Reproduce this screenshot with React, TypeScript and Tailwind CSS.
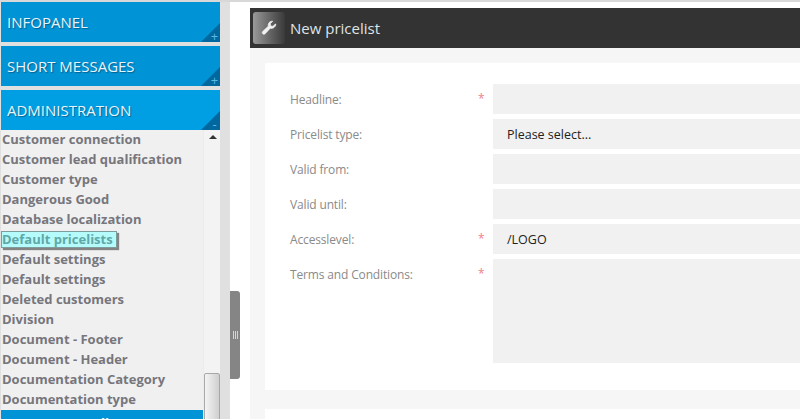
import React from "react";

const items = [
  "Customer connection",
  "Customer lead qualification",
  "Customer type",
  "Dangerous Good",
  "Database localization",
  "Default pricelists",
  "Default settings",
  "Default settings",
  "Deleted customers",
  "Division",
  "Document - Footer",
  "Document - Header",
  "Documentation Category",
  "Documentation type",
];

function Panel({ title, sign, active }: { title: string; sign: string; active?: boolean }) {
  return (
    <div className={`relative h-10 shrink-0 ${active ? "bg-[#009fe3]" : "bg-[#0093d6]"} flex items-center pl-[6px]`}>
      <span className="text-[15px] text-[#e8f4fb] [text-shadow:1px_1px_1px_rgba(0,0,0,0.35)]">{title}</span>
      <div className="absolute right-0 bottom-0 w-[19px] h-[19px] bg-[#00689f] [clip-path:polygon(100%_0,100%_100%,0_100%)]" />
      <span className="absolute right-[1px] bottom-0 text-[13px] leading-[11px] h-[11px] w-[9px] text-center text-[#5bb8e6]">{sign}</span>
    </div>
  );
}

function Row({ label, req, value, tall }: { label: string; req?: boolean; value?: string; tall?: boolean }) {
  return (
    <div className="flex">
      <div className="w-[188px] h-[30px] shrink-0 text-[12px] tracking-[-0.15px] text-[#8a8a8a] leading-[31px]">{label}</div>
      <div className="w-[15px] h-[30px] shrink-0 text-[12px] leading-[30px] text-[#f4808a]">{req ? "*" : ""}</div>
      <div className={`flex-1 bg-[#f1f1f1] pl-[14px] text-[12.5px] text-[#222] leading-[31px] ${tall ? "h-[104px]" : "h-[30px]"}`}>{value}</div>
    </div>
  );
}

export default function App() {
  return (
    <div className="relative h-[419px] w-[800px] overflow-hidden bg-white flex flex-col font-['Open_Sans',sans-serif]">
      <div className="h-[2px] shrink-0 bg-[#d8d8d8]" />
      <div className="flex flex-1 min-h-0">
        <aside className="w-[230px] shrink-0 bg-[#e0e0e0] pl-[1px] pr-[10px] flex flex-col gap-[4px]">
          <Panel title="INFOPANEL" sign="+" />
          <Panel title="SHORT MESSAGES" sign="+" />
          <div className="flex flex-col flex-1 min-h-0">
            <Panel title="ADMINISTRATION" sign="-" active />
            <div className="relative flex-1 min-h-0 bg-[#f0f0f0] overflow-hidden flex">
              <div className="w-[202px] shrink-0 flex flex-col">
                {items.map((t, i) => (
                  <div key={i} className="h-5 shrink-0 flex items-center">
                    {t === "Default pricelists" ? (
                      <span className="text-[13px] font-bold leading-[15px] text-[#5fa8a8] bg-[#b5fbfb] border border-[#7f9c9c] shadow-[2px_2px_1px_rgba(0,0,0,0.45)] pr-[3px] mt-[-1px]">{t}</span>
                    ) : (
                      <span className="text-[13px] font-bold text-[#76767c] pl-[1px]">{t}</span>
                    )}
                  </div>
                ))}
                <div className="h-[10px] shrink-0 bg-[#0093d6] text-white text-[13px] leading-[26px] font-bold text-center overflow-hidden">Edit</div>
              </div>
              <div className="relative flex-1 bg-[#f3f3f3] border-l border-[#ececec]">
                <div className="absolute left-[5px] top-[5px] w-0 h-0 border-x-[4px] border-x-transparent border-b-[4px] border-b-[#333]" />
                <div className="absolute left-0 right-0 top-[243px] h-[60px] bg-gradient-to-r from-[#f4f4f4] to-[#cfcfcf] border border-[#a8a8a8] rounded-t-[2px]" />
              </div>
            </div>
          </div>
        </aside>
        <main className="flex-1 min-w-0 pl-[20px] pt-[6px]">
          <div className="h-[40px] bg-[#333333] flex items-center pl-[3px] gap-[5px]">
            <div className="w-[32px] h-[32px] rounded-[3px] bg-gradient-to-r from-[#9a9a9a] to-[#3a3a3a] flex items-center justify-center">
              <svg width="16" height="16" viewBox="0 0 24 24" fill="#f2f2f2" stroke="#f2f2f2" strokeWidth="1">
                <path d="M22 6.5a6 6 0 0 1-8 5.7L6.2 20.6a2.5 2.5 0 0 1-3.6-3.5l8.3-7.9A6 6 0 0 1 17.6 1.8l-3.7 3.7.6 3.4 3.4.6 3.7-3.6c.3.6.4 1.4.4 2z" />
              </svg>
            </div>
            <span className="text-[15px] text-[#dfe3e6]">New pricelist</span>
          </div>
          <div className="bg-[#f6f6f6] pl-[15px] pt-[15px] h-[371px]">
            <div className="bg-white h-[327px] pl-[25px] pt-[21px] flex flex-col gap-[5px]">
              <Row label="Headline:" req />
              <Row label="Pricelist type:" value="Please select..." />
              <Row label="Valid from:" />
              <Row label="Valid until:" />
              <Row label="Accesslevel:" req value="/LOGO" />
              <Row label="Terms and Conditions:" req tall />
            </div>
            <div className="h-[19px]" />
            <div className="bg-white h-[10px]" />
          </div>
        </main>
      </div>
      <div className="absolute left-[230px] top-[291px] w-[10px] h-[88px] bg-[#858585] rounded-r-[3px] flex items-center justify-center">
        <div className="flex gap-[1px]">
          <div className="w-px h-[8px] bg-[#d5d5d5]" />
          <div className="w-px h-[8px] bg-[#d5d5d5]" />
          <div className="w-px h-[8px] bg-[#d5d5d5]" />
        </div>
      </div>
    </div>
  );
}
